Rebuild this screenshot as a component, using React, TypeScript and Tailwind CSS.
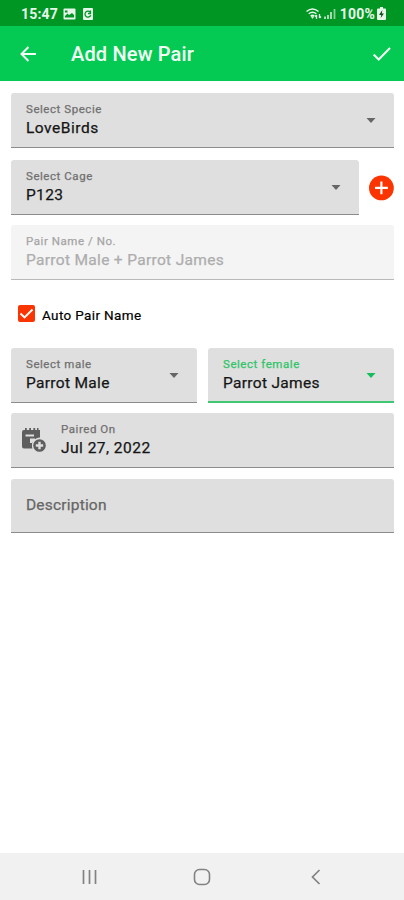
import type { ReactNode } from 'react';

export default function App() {
  return (
    <div className="flex h-[900px] w-[404px] flex-col bg-white font-['Roboto',sans-serif] text-[#111]">
      <StatusBar />
      <AppBar />
      <main className="flex flex-1 flex-col pl-[11px] pr-[10px] pt-3">
        <Field label="Select Specie" value="LoveBirds" valueClass="tracking-[0.52px]" dropdown />
        <div className="mt-3 flex items-center">
          <Field label="Select Cage" value="P123" className="w-[348px]" dropdown />
          <AddIcon />
        </div>
        <Field
          label="Pair Name / No."
          value="Parrot Male + Parrot James"
          className="mt-[10px]"
          variant="disabled"
        />
        <label className="mt-[25px] flex h-[17px] items-center pl-[7px]">
          <CheckedBox />
          <span className="ml-[7px] mt-[2px] text-[13.5px] leading-4 tracking-[0.36px] text-black [-webkit-text-stroke:0.2px]">
            Auto Pair Name
          </span>
        </label>
        <div className="mt-[26px] flex gap-[11px]">
          <Field label="Select male" value="Parrot Male" className="w-[186px]" dropdown />
          <Field label="Select female" value="Parrot James" className="w-[186px]" variant="focused" dropdown />
        </div>
        <Field
          label="Paired On"
          value="Jul 27, 2022"
          valueClass="tracking-[0.48px]"
          className="mt-[10px]"
          icon={<CalendarPlus />}
        />
        <div className="mt-[11px] flex h-[54px] items-center rounded-t-[3px] border-b border-[#8c8c8c] bg-[#dfdfdf] pl-[15px] text-[15.5px] tracking-[0.2px] text-[#666] [-webkit-text-stroke:0.25px]">
          Description
        </div>
      </main>
      <NavigationBar />
    </div>
  );
}

const FIELD_STYLES = {
  normal: {
    box: 'border-b border-[#8c8c8c] bg-[#dfdfdf]',
    label: 'text-[#707070]',
    value: 'text-[#151515]',
    arrow: 'text-[#666]',
  },
  disabled: {
    box: 'border-b border-[#b9b9b9] bg-[#f4f4f4]',
    label: 'text-[#a5a5a5]',
    value: 'text-[#adadad]',
    arrow: 'text-[#aaa]',
  },
  focused: {
    box: 'border-b-2 border-[#3fc872] bg-[#dfdfdf]',
    label: 'text-[#2fc468]',
    value: 'text-[#151515]',
    arrow: 'text-[#13be59]',
  },
} as const;

function Field({
  label,
  value,
  valueClass = 'tracking-[0.32px]',
  className = '',
  variant = 'normal',
  dropdown = false,
  icon,
}: {
  label: string;
  value: string;
  valueClass?: string;
  className?: string;
  variant?: keyof typeof FIELD_STYLES;
  dropdown?: boolean;
  icon?: ReactNode;
}) {
  const style = FIELD_STYLES[variant];
  return (
    <div className={`flex h-[55px] shrink-0 items-start rounded-t-[3px] ${style.box} ${className}`}>
      {icon}
      <div className="flex-1 pl-[15px] pt-[9px] [-webkit-text-stroke:0.25px]">
        <div className={`text-[11.5px] leading-[14px] tracking-[0.55px] ${style.label}`}>{label}</div>
        <div className={`mt-[2px] text-[15.5px] leading-[20px] ${style.value} ${valueClass}`}>{value}</div>
      </div>
      {dropdown && (
        <svg className={`mr-[18px] mt-[25px] h-[5px] w-[10px] ${style.arrow}`} viewBox="0 0 10 5" fill="currentColor">
          <path d="M0.500 0h9L5 5z" />
        </svg>
      )}
    </div>
  );
}

function StatusBar() {
  return (
    <div className="flex h-[26px] shrink-0 items-center bg-[#009624] pl-[21px] pr-[18px] text-[#e8f6ea]">
      <span className="mt-px text-[14px] font-bold leading-4 tracking-[0.2px]">15:47</span>
      <svg className="ml-[5px] mt-px h-[12px] w-[13px]" viewBox="0 0 13 12">
        <rect x="0.5" y="0.5" width="12" height="11" rx="1" fill="currentColor" />
        <path d="M2 9.500V8l2.500-2.500L6 7l3-2 2 2v2.500zM2 2.500h2.500v2H2z" fill="#009624" />
      </svg>
      <svg className="ml-[7px] mt-px h-[12px] w-[10px]" viewBox="0 0 10 12">
        <rect width="10" height="12" rx="1" fill="currentColor" />
        <path d="M7.3 4.2A3 3 0 1 0 7.800 7.200M7.500 2.500v3H5" fill="none" stroke="#009624" strokeWidth="1.3" />
      </svg>
      <svg className="ml-auto h-[13px] w-[31px]" viewBox="0 0 31 13" fill="none" stroke="currentColor">
        <path d="M0.500 4.500q6-5 12 0M2.700 6.800q3.800-3.200 7.600 0M4.700 9q1.800-1.500 3.600 0" strokeWidth="1.5" />
        <path d="M5 9.500l1.500 2L8 9.500z" fill="currentColor" strokeWidth="0.5" />
        <path d="M10.500 12V8M9 9.500L10.500 8M13.500 7v4M15 9.500L13.500 11" strokeWidth="1.3" />
        <path d="M19 12V9.500M22 12V8M25 12V5" strokeWidth="1.8" opacity="0.8" />
        <path d="M28.500 12V2" strokeWidth="1.8" opacity="0.6" />
      </svg>
      <span className="ml-[3px] mt-px text-[14px] font-bold leading-4 tracking-[0.2px]">100%</span>
      <svg className="ml-[2px] h-[13px] w-[9px]" viewBox="0 0 9 13">
        <path d="M3 0h3v1.500h2q1 0 1 1V12q0 1-1 1H1q-1 0-1-1V2.500q0-1 1-1h2z" fill="currentColor" />
        <path d="M5.300 3L2 8h2.200L3.700 11 7 6.500H4.900z" fill="#174d23" />
      </svg>
    </div>
  );
}

function AppBar() {
  return (
    <header className="flex h-[55px] shrink-0 items-center bg-[#04ca54] pl-[20px] pr-[13px] text-[#f3fff6]">
      <svg className="h-[16px] w-[16px]" viewBox="0 0 16 16" fill="none" stroke="currentColor" strokeWidth="2">
        <path d="M16 8H2M8.500 1L1.500 8l7 7" />
      </svg>
      <h1 className="ml-[35px] text-[20px] font-medium leading-6 tracking-[0.16px]">Add New Pair</h1>
      <svg className="ml-auto h-[14px] w-[18px]" viewBox="0 0 18 14" fill="none" stroke="currentColor" strokeWidth="2">
        <path d="M0.700 7.500l5 5L17 1" />
      </svg>
    </header>
  );
}

function AddIcon() {
  return (
    <svg className="ml-[10px] h-[26px] w-[26px]" viewBox="0 0 26 26">
      <circle cx="12.900" cy="12.900" r="12.900" fill="#fb3502" />
      <path d="M12.900 6.200v13.400M6.200 12.900h13.400" stroke="#fff" strokeWidth="2.200" />
    </svg>
  );
}

function CheckedBox() {
  return (
    <svg className="h-[17px] w-[17px]" viewBox="0 0 17 17">
      <rect width="17" height="17" rx="2" fill="#fb3502" />
      <path d="M2.500 8.500l4 4L14.500 4.500" fill="none" stroke="#fff" strokeWidth="1.900" />
    </svg>
  );
}

function CalendarPlus() {
  return (
    <svg className="ml-[11px] mt-[15px] h-[25px] w-[24px]" viewBox="0 0 24 25" fill="#5e5e5e">
      <path
        d="M2 2h1V0h1.800v2h2.400V0H9v2h2.400V0h1.800v2H15V0h1.500v2H18v7.500a8 8 0 0 0-7.500 11H2q-2 0-2-2V4q0-2 2-2zM3.500 6.500v2H12v-2z"
        fillRule="evenodd"
      />
      <path d="M8 10.500h5V12l-3 3H8z" fill="#dfdfdf" />
      <circle cx="17.500" cy="17.500" r="7.300" fill="#dfdfdf" />
      <circle cx="17.500" cy="17.500" r="6.300" />
      <path d="M17.500 13.800v7.400M13.800 17.500h7.400" stroke="#dfdfdf" strokeWidth="2.400" />
    </svg>
  );
}

function NavigationBar() {
  return (
    <nav className="flex h-[47px] shrink-0 items-center bg-[#f1f1f1] pl-[81px] pr-[83px] text-[#828282]">
      <svg className="h-[16px] w-[17px]" viewBox="0 0 17 16" stroke="currentColor" strokeWidth="1.700">
        <path d="M2.500 1v14M8.500 1v14M14.500 1v14" />
      </svg>
      <svg className="ml-[95px] h-[18px] w-[18px]" viewBox="0 0 18 18" fill="none" stroke="currentColor" strokeWidth="1.600">
        <rect x="1.500" y="1.500" width="15" height="15" rx="5" />
      </svg>
      <svg className="ml-auto h-[16px] w-[10px]" viewBox="0 0 10 16" fill="none" stroke="currentColor" strokeWidth="1.700">
        <path d="M8.500 1L1.500 8l7 7" />
      </svg>
    </nav>
  );
}
